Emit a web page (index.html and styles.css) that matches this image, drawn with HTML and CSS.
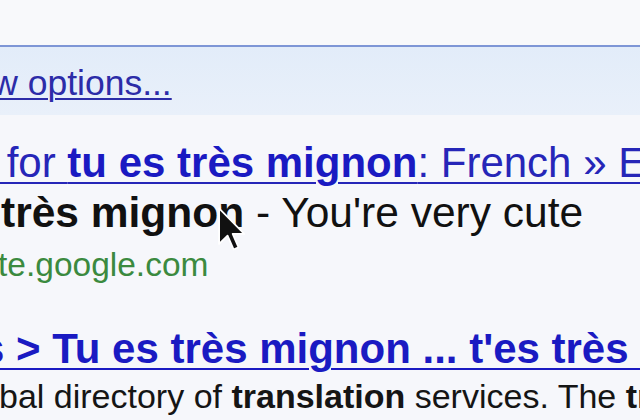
FILE: index.html
```html
<!DOCTYPE html>
<html>
<head>
<meta charset="utf-8">
<link rel="stylesheet" href="styles.css">
</head>
<body>
<div class="page">
  <div class="topbar"></div>
  <div class="band"><a class="options" href="#">Show options...</a></div>
  <div class="results">
    <div class="title"><a href="#">&nbsp;for <b>tu es très mignon</b>: French » English</a></div>
    <div class="def"><b>très mignon</b> - You're very cute</div>
    <div class="url">te.google.com</div>
    <div class="title2"><a href="#">s &gt; Tu es très mignon ... t'es très mignon</a></div>
    <div class="snippet">bal directory of <b>translation</b> services. The <b>translation</b></div>
  </div>
  <svg class="cursor" width="28" height="44" viewBox="0 0 12.6 19.6">
    <path d="M0.5 0.5 L0.5 16.5 L4.3 12.8 L7 19 L9.2 18 L6.6 12 L11.8 12 Z" fill="#111" stroke="#fff" stroke-width="0.8" stroke-linejoin="round"/>
  </svg>
</div>
</body>
</html>
```
FILE: styles.css
```css
html, body {
  margin: 0;
  padding: 0;
}
body {
  width: 640px;
  height: 420px;
  overflow: hidden;
  background: #f6f7fa;
  font-family: "Liberation Sans", Arial, sans-serif;
}
.page {
  position: relative;
  width: 640px;
  height: 420px;
  overflow: hidden;
  white-space: nowrap;
}
.topbar {
  height: 45px;
  background: #f8f9fb;
  border-bottom: 2px solid #7e96d6;
}
.band {
  height: 64px;
  padding-top: 4px;
  line-height: 64px;
  background: linear-gradient(#e2ecf9, #e9f0fa);
  font-size: 35.5px;
}
.options {
  display: inline-block;
  margin-left: -71px;
  color: #2c2ca8;
  text-decoration: underline;
  text-decoration-thickness: 2px;
  text-underline-offset: 3px;
}
.results {
  padding-top: 23px;
  background: #f6f7fb;
  height: 282px;
  border-bottom: 1px solid #b9bcc2;
}
.title {
  font-size: 42px;
  line-height: 50px;
  margin-left: -5px;
}
.title a, .title2 a {
  color: #2626b8;
  text-decoration: underline;
  text-decoration-thickness: 2px;
  text-underline-offset: 5px;
}
.title b, .title2 a {
  font-weight: bold;
  color: #1a1ac2;
}
.def {
  font-size: 42.5px;
  line-height: 50px;
  color: #111;
  margin-left: 1px;
}
.url {
  margin-top: 2px;
  font-size: 33.5px;
  line-height: 50px;
  color: #3b8a3f;
  margin-left: -2px;
}
.title2 {
  margin-top: 34px;
  font-size: 42px;
  line-height: 50px;
  margin-left: -19px;
}
.snippet {
  font-size: 34px;
  line-height: 44px;
  color: #151515;
  margin-left: -1px;
}
.cursor {
  position: absolute;
  left: 218px;
  top: 207px;
}
```
